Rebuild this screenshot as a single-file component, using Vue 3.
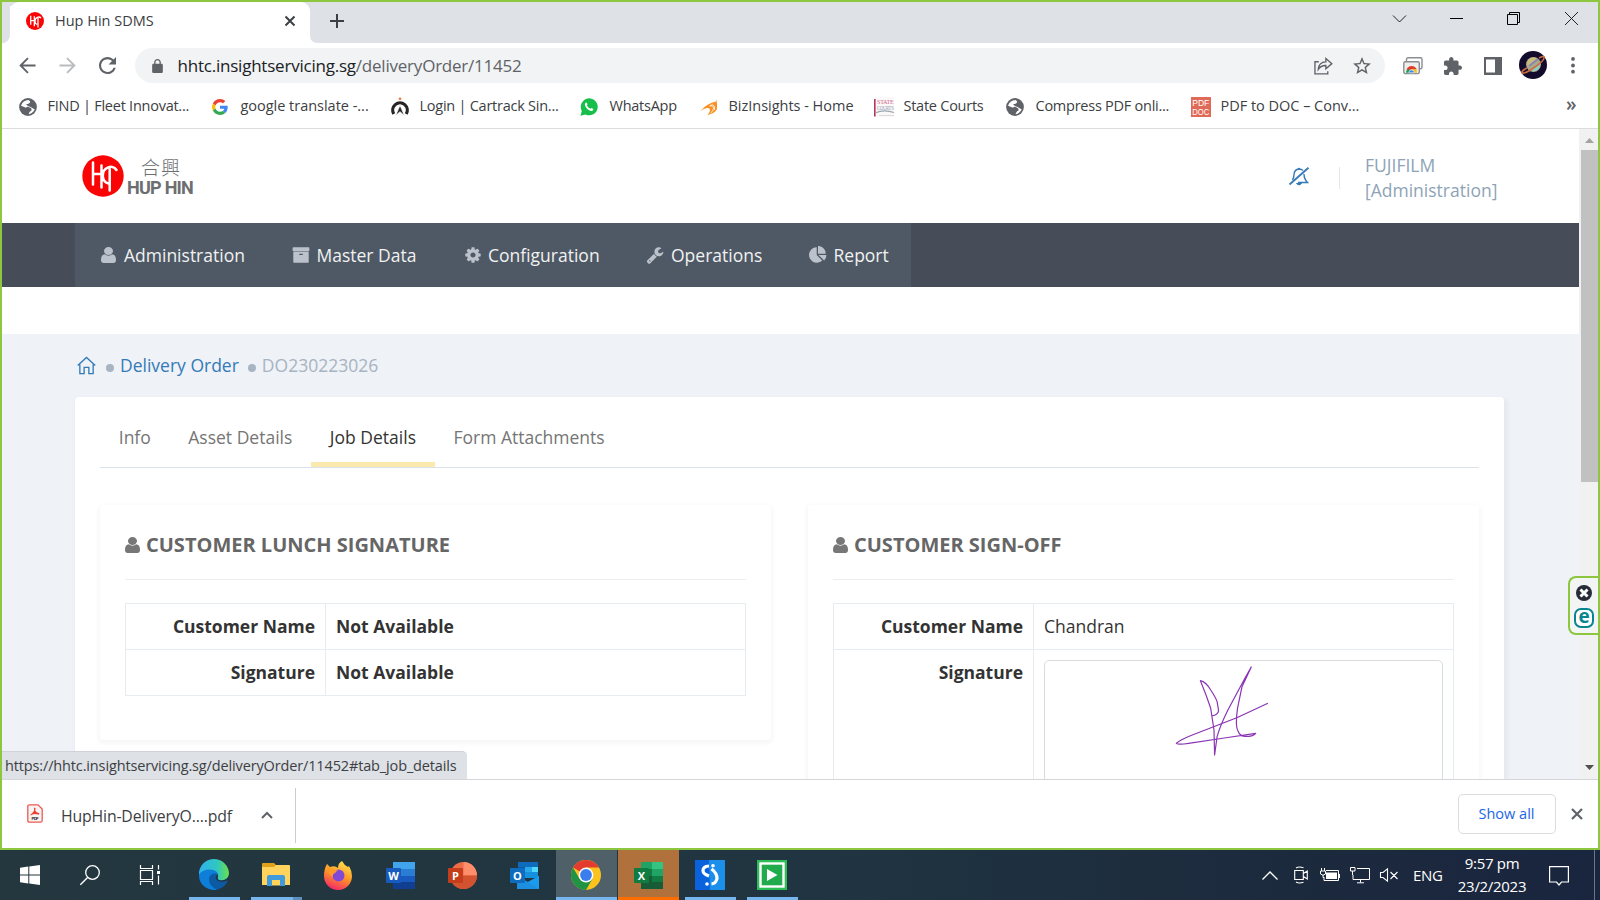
<script setup>
const userPath = 'M1536 1399q0 109-62.5 187t-150.5 78h-854q-88 0-150.5-78t-62.5-187q0-85 8.5-160.5t31.5-152 58.5-131 94-89 134.5-34.5q131 128 313 128t313-128q76 0 134.5 34.5t94 89 58.5 131 31.5 152 8.5 160.5zm-256-887q0 159-112.5 271.5t-271.5 112.5-271.5-112.5-112.5-271.5 112.5-271.5 271.5-112.5 271.5 112.5 112.5 271.5z'

const bookmarks = [
  { icon: 'globe', label: 'FIND | Fleet Innovat...' },
  { icon: 'google', label: 'google translate -...', wide: true },
  { icon: 'cartrack', label: 'Login | Cartrack Sin...' },
  { icon: 'whatsapp', label: 'WhatsApp', gap: true },
  { icon: 'biz', label: 'BizInsights - Home', wide: true },
  { icon: 'courts', label: 'State Courts', gap: true },
  { icon: 'globe', label: 'Compress PDF onli...', gap: true },
  { icon: 'pdfdoc', label: 'PDF to DOC – Conv...', gap: true, wide: true },
]

const menu = [
  { label: 'Administration', box: '256 128 1280 1536', path: userPath },
  { label: 'Master Data', path: 'M1088 832q0-26-19-45t-45-19h-256q-26 0-45 19t-19 45 19 45 45 19h256q26 0 45-19t19-45zm576-192v960q0 26-19 45t-45 19h-1408q-26 0-45-19t-19-45v-960q0-26 19-45t45-19h1408q26 0 45 19t19 45zm64-448v256q0 26-19 45t-45 19h-1536q-26 0-45-19t-19-45v-256q0-26 19-45t45-19h1536q26 0 45 19t19 45z' },
  { label: 'Configuration', path: 'M1152 896q0-106-75-181t-181-75-181 75-75 181 75 181 181 75 181-75 75-181zm512-109v222q0 12-8 23t-20 13l-185 28q-19 54-39 91 35 50 107 138 10 12 10 25t-9 23q-27 37-99 108t-94 71q-12 0-26-9l-138-108q-44 23-91 38-16 136-29 186-7 28-36 28h-222q-14 0-24.5-8.5t-11.5-21.5l-28-184q-49-16-90-37l-141 107q-10 9-25 9-14 0-25-11-126-114-165-168-7-10-7-23 0-12 8-23 15-21 51-66.5t54-70.5q-27-50-41-99l-183-27q-13-2-21-12.5t-8-23.5v-222q0-12 8-23t19-13l186-28q14-46 39-92-40-57-107-138-10-12-10-24 0-10 9-23 26-36 98.5-107.5t94.5-71.5q13 0 26 10l138 107q44-23 91-38 16-136 29-186 7-28 36-28h222q14 0 24.5 8.5t11.5 21.5l28 184q49 16 90 37l142-107q9-9 24-9 13 0 25 10 129 119 165 170 7 8 7 22 0 12-8 23-15 21-51 66.5t-54 70.5q26 50 41 98l183 28q13 2 21 12.5t8 23.5z' },
  { label: 'Operations', path: 'M448 1472q0-26-19-45t-45-19-45 19-19 45 19 45 45 19 45-19 19-45zm644-420l-682 682q-37 37-90 37-52 0-91-37l-106-108q-38-36-38-90 0-53 38-91l681-681q39 98 114.5 173.5t173.5 114.5zm634-435q0 39-23 106-47 134-164.5 217.5t-258.5 83.5q-185 0-316.5-131.5t-131.5-316.5 131.5-316.5 316.5-131.5q58 0 121.5 16.5t107.5 46.5q16 11 16 28t-16 28l-293 169v224l193 107q5-3 79-48.5t135.5-81 70.5-35.5q15 0 23.5 10t8.5 25z' },
  { label: 'Report', path: 'M768 890l546 546q-106 108-247.5 168t-298.5 60q-209 0-385.5-103t-279.5-279.5-103-385.5 103-385.5 279.5-279.5 385.5-103v762zm187 6h773q0 157-60 298.5t-168 247.5zm709-128h-768v-768q209 0 385.5 103t279.5 279.5 103 385.5z' },
]

const tabs = ['Info', 'Asset Details', 'Job Details', 'Form Attachments']
</script>

<template>
  <div class="screen">
    <div class="window">
      <div class="tabstrip">
        <div class="prev-tab"></div>
        <div class="tab">
          <svg class="favicon" viewBox="0 0 42 42"><circle cx="21" cy="21" r="21" fill="#fa0505" /><path d="M11 9V30M11 20H19M19.500 10V33M35 14C30 9 20 13 21 23Q22 28 26 29M28 14V36" fill="none" stroke="#fff" stroke-width="3" /></svg>
          <span class="tab-title">Hup Hin SDMS</span>
          <svg class="tab-close" viewBox="0 0 12 12"><path d="M1.500 1.500L10.500 10.500M10.500 1.500L1.500 10.500" stroke="#3c4043" stroke-width="2" /></svg>
        </div>
        <svg class="flare" viewBox="0 0 8 8"><path d="M0 0V8H8Q0 8 0 0" fill="#fff" /></svg>
        <svg class="plus" viewBox="0 0 14 14"><path d="M7 0V14M0 7H14" stroke="#3c4043" stroke-width="2" /></svg>
        <div class="winbtns">
          <svg viewBox="0 0 13 13"><path d="M0 3.500L6.500 10L13 3.500" fill="none" stroke="#222" /></svg>
          <svg viewBox="0 0 13 13"><path d="M0 6.500H13" stroke="#000" /></svg>
          <svg viewBox="0 0 13 13"><path d="M.5 2.500H10.500V12.500H.5ZM2.500 2V.5H12.500V10.500H11" fill="none" stroke="#000" /></svg>
          <svg viewBox="0 0 13 13"><path d="M0 0L13 13M13 0L0 13" stroke="#222" /></svg>
        </div>
      </div>

      <div class="toolbar">
        <svg class="arrow" viewBox="0 0 18 18"><path d="M17.500 9H2M9.500 1.200L1.700 9L9.500 16.800" fill="none" stroke="#5f6368" stroke-width="2" /></svg>
        <svg class="arrow fwd" viewBox="0 0 18 18"><path d="M.5 9H16M8.500 1.200L16.300 9L8.500 16.800" fill="none" stroke="#babcbe" stroke-width="2" /></svg>
        <svg class="reload" viewBox="4 4 16 16"><path fill="#5f6368" d="M17.650 6.350C16.200 4.900 14.210 4 12 4c-4.420 0-7.990 3.580-7.990 8s3.570 8 7.990 8c3.730 0 6.840-2.550 7.730-6h-2.080c-.82 2.330-3.040 4-5.650 4-3.310 0-6-2.690-6-6s2.690-6 6-6c1.660 0 3.140.69 4.220 1.780L13 11h7V4l-2.350 2.350z" /></svg>
        <div class="omnibox">
          <svg class="lock" viewBox="4 1 16 21"><path fill="#5f6368" d="M18 8h-1V6c0-2.760-2.240-5-5-5S7 3.240 7 6v2H6c-1.100 0-2 .9-2 2v10c0 1.100.9 2 2 2h12c1.100 0 2-.9 2-2V10c0-1.100-.9-2-2-2zM9 6c0-1.660 1.340-3 3-3s3 1.340 3 3v2H9V6z" /></svg>
          <span class="url">hhtc.insightservicing.sg<i>/deliveryOrder/11452</i></span>
          <svg class="share" viewBox="0 0 20 18"><path d="M5 4.500H1V17.200H14.500V14.500M4.500 12.500Q5 5 12.500 4.700V1L18.800 6.500L12.500 12V8.500Q7.500 8.200 4.500 12.500Z" fill="none" stroke="#5f6368" stroke-width="1.400" /></svg>
          <svg class="star" viewBox="2 2 20 19"><path fill="#5f6368" d="M22 9.240l-7.190-.62L12 2 9.190 8.630 2 9.240l5.460 4.730L5.820 21 12 17.270 18.180 21l-1.630-7.030L22 9.240zM12 15.400l-3.760 2.270 1-4.280-3.320-2.880 4.380-.38L12 6.100l1.710 4.040 4.380.38-3.320 2.880 1 4.280L12 15.400z" /></svg>
        </div>
        <div class="actions">
          <svg class="a1" viewBox="0 0 20 18"><rect x="3.500" y=".8" width="15.500" height="11" rx="1.500" fill="#fff" stroke="#8a8d91" stroke-width="1.400" /><rect x=".8" y="4.800" width="15.500" height="11.800" rx="1.500" fill="#eee" stroke="#8a8d91" stroke-width="1.400" /><path d="M3 15.800A5.500 5.500 0 0 1 5 11.500L8.500 13V15.800Z" fill="#1e9e4a" /><path d="M3.500 12.500A5.500 5.500 0 0 1 13.800 12.500H8.500Z" fill="#e33b2e" /><path d="M13.500 12.300L14 15.800H8.500V12.300Z" fill="#fbc116" /><path d="M5.800 15.800A2.800 2.800 0 0 1 11.400 15.800Z" fill="#3f83f1" stroke="#fff" stroke-width=".6" /></svg>
          <svg class="a2" viewBox="2 1 21 21"><path fill="#5f6368" d="M20.500 11H19V7c0-1.100-.9-2-2-2h-4V3.500C13 2.120 11.880 1 10.500 1S8 2.120 8 3.500V5H4c-1.100 0-1.990.9-1.990 2v3.800H3.500c1.490 0 2.700 1.210 2.700 2.700s-1.210 2.700-2.700 2.700H2V20c0 1.100.9 2 2 2h3.800v-1.500c0-1.490 1.210-2.700 2.700-2.700 1.490 0 2.700 1.210 2.700 2.700V22H17c1.100 0 2-.9 2-2v-4h1.500c1.380 0 2.500-1.120 2.500-2.500S21.880 11 20.500 11z" /></svg>
          <svg class="a3" viewBox="0 0 18 18"><path d="M0 0H18V18H0ZM2 2.500V15.500H11V2.500Z" fill="#5f6368" fill-rule="evenodd" /></svg>
          <svg class="a4" viewBox="0 0 28 28"><circle cx="14" cy="14" r="14" fill="#120b2b" /><circle cx="14.500" cy="13.500" r="7.500" fill="#a8a98a" /><path d="M9 9Q13 5 18 7.500L10 16Q7 13 9 9Z" fill="#c9bb7c" /><path d="M14 20.500Q21 19 21.500 13L12 18Z" fill="#8fd0c5" /><path d="M10 15L19 8" stroke="#8585b5" stroke-width="1.800" /><path d="M3 22Q2 20 8 17M3 22Q6 23 16 16T25 6Q25 4.500 20 7" fill="none" stroke="#cf6c42" stroke-width="1.600" /></svg>
          <svg class="a5" viewBox="0 0 4 18"><circle cx="2" cy="2" r="2" fill="#5f6368" /><circle cx="2" cy="9" r="2" fill="#5f6368" /><circle cx="2" cy="15.500" r="2" fill="#5f6368" /></svg>
        </div>
      </div>

      <div class="bookmarks">
        <div v-for="(b, i) in bookmarks" :key="i" class="bm" :class="{ wide: b.wide, gap: b.gap }">
          <span class="bm-icon">
            <svg v-if="b.icon === 'globe'" viewBox="0 0 18 18" width="18" height="18"><circle cx="9" cy="9" r="8.900" fill="#5f6368" /><path d="M2 7.800L7 9.800Q8.500 8 10.500 9.600Q13 10 12.500 12.500Q10.500 13 9.500 16.200Q13 16 15.800 11.500L11.500 9Q8.500 8.500 7 6Q11.500 6 11 3.200L9.500 2Q4 2.200 2 7.800Z" fill="#fff" /></svg>
            <svg v-else-if="b.icon === 'google'" viewBox="0 0 48 48" width="16" height="16"><path fill="#ea4335" d="M24 9.500c3.500 0 6.700 1.200 9.200 3.600l6.900-6.900C35.900 2.400 30.500 0 24 0 14.600 0 6.500 5.400 2.600 13.200l8 6.200C12.400 13.700 17.700 9.500 24 9.500z" /><path fill="#4285f4" d="M47 24.600c0-1.600-.2-3.100-.4-4.600H24v9h12.900c-.6 3-2.300 5.500-4.800 7.200l7.700 6C44.400 38 47 32 47 24.600z" /><path fill="#fbbc05" d="M10.500 28.600c-.5-1.400-.8-3-.8-4.600s.3-3.100.8-4.600l-8-6.200C.9 16.500 0 20.100 0 24s.9 7.500 2.600 10.800z" /><path fill="#34a853" d="M24 48c6.500 0 11.900-2.100 15.900-5.800l-7.700-6c-2.200 1.500-4.900 2.300-8.200 2.300-6.300 0-11.600-4.200-13.500-9.900l-8 6.200C6.500 42.600 14.600 48 24 48z" /></svg>
            <svg v-else-if="b.icon === 'cartrack'" viewBox="0 0 18 20" width="18" height="20"><circle cx="9" cy="1.700" r="1.500" fill="#f0895c" /><path d="M2.800 17A7.300 7.300 0 1 1 15.200 17" fill="none" stroke="#262626" stroke-width="3.200" /><path d="M9 8.200L13.500 18.800L9 14.700L4.500 18.800Z" fill="#262626" stroke="#fff" stroke-width=".8" /></svg>
            <svg v-else-if="b.icon === 'whatsapp'" viewBox="0 0 18 18" width="18" height="18"><path d="M.5 17.800L1.800 13A8.500 8.500 0 1 1 5.500 16.500Z" fill="#16bf4b" /><path d="M5.600 4.700Q6.800 3.900 7.500 6.300L6.900 7.500Q8 9.800 10.400 10.800L11.500 10Q14 10.800 13 12.200Q11.300 14.200 7.600 11.200Q3.500 7.200 5.600 4.700Z" fill="#fff" /></svg>
            <svg v-else-if="b.icon === 'biz'" viewBox="0 0 18 18" width="18" height="18"><path d="M.5 13Q7 5 16 3.500L16.500 1L17 6V11Q15 15.500 7.500 17Q11 13 9.500 10.500Q6 9 .5 13Z" fill="#f79226" /><path d="M9.500 8Q14 7 13.500 10.500Q13 13.500 10.500 15M10 7.500Q13 5.500 14.500 8.500V12" fill="none" stroke="#fff" stroke-width=".8" /></svg>
            <svg v-else-if="b.icon === 'courts'" viewBox="0 0 20 20" width="20" height="20"><rect width="20" height="20" fill="#fbf8f9" /><path d="M.8 2V19.500" stroke="#b8325a" stroke-width="1.600" /><text x="3" y="6.500" font-size="6" textLength="16.500" lengthAdjust="spacingAndGlyphs" fill="#d1668a" font-family="Liberation Serif">STATE</text><text x="3" y="12.500" font-size="5.500" textLength="16.500" lengthAdjust="spacingAndGlyphs" fill="#8b97ac" font-family="Liberation Serif">COURTS</text><path d="M1 16Q10 12 20 15.500" fill="none" stroke="#9aa5b0" stroke-width="1.200" /><path d="M5 18.500H20" stroke="#dadada" /></svg>
            <svg v-else viewBox="0 0 20 20" width="20" height="20"><rect width="20" height="20" fill="#df6a57" /><text x="1.300" y="8.800" font-size="9" textLength="17" lengthAdjust="spacingAndGlyphs" fill="#fff" font-family="Liberation Sans">PDF</text><text x="1.300" y="17.800" font-size="9" textLength="17" lengthAdjust="spacingAndGlyphs" fill="#fff" font-family="Liberation Sans">DOC</text></svg>
          </span>
          <span class="bm-label">{{ b.label }}</span>
        </div>
        <span class="more">»</span>
      </div>

      <div class="viewport">
        <div class="page">
          <header class="head">
            <div class="logo">
              <svg class="logo-mark" viewBox="0 0 42 42"><circle cx="21" cy="21" r="20.700" fill="#fa0505" /><path d="M11 7.500V29.500M11 19H19.500M19.500 10.500V32.500M34.500 15C31 9 20.500 12 20.800 21Q21 27 26.500 28.500M27.700 14V35.500" fill="none" stroke="#fff" stroke-width="2.500" stroke-linecap="round" /></svg>
              <div class="logo-text"><span class="cn">合興</span><span class="en">HUP HIN</span></div>
            </div>
            <div class="user">
              <svg class="bell" viewBox="0 0 20 20"><path d="M3.500 13Q5 11 5 7.500Q5.300 2.500 10 2Q12.500 2 14 3.500M15 7Q15 12 18.500 15.500H9" fill="none" stroke="#337ab7" stroke-width="1.400" /><path d="M.5 17.500L19.500 .8" stroke="#337ab7" stroke-width="1.800" /><path d="M7.500 16.500Q10 19.500 12.500 16.500Z" fill="#337ab7" stroke="#337ab7" /><circle cx="10" cy="1.800" r="1.100" fill="#337ab7" /></svg>
              <i class="sep"></i>
              <div class="who"><div>FUJIFILM</div><div>[Administration]</div></div>
            </div>
          </header>
          <nav class="nav">
            <div class="menu">
              <a v-for="m in menu" :key="m.label" :class="'m-' + m.label.slice(0, 3).toLowerCase()"><svg :viewBox="m.box || '0 0 1792 1792'" preserveAspectRatio="none"><path :d="m.path" fill="#bcc2cb" /></svg><span>{{ m.label }}</span></a>
            </div>
          </nav>
          <div class="strip"></div>
          <main class="content">
            <div class="crumbs">
              <svg class="home" viewBox="0 0 20 19"><path d="M.8 9.500L10 1L19.200 9.500M3 8.500V18H7.500V11.500H12.500V18H17V8.500" fill="none" stroke="#337ab7" stroke-width="1.400" /></svg>
              <i class="dot d1"></i><a>Delivery Order</a><i class="dot d2"></i><span>DO230223026</span>
            </div>
            <section class="card">
              <div class="tabs">
                <a v-for="t in tabs" :key="t" :class="{ on: t === 'Job Details' }">{{ t }}</a>
              </div>
              <div class="cols">
                <section class="portlet short">
                  <h2><svg viewBox="256 128 1280 1536" preserveAspectRatio="none"><path :d="userPath" fill="#777" /></svg>CUSTOMER LUNCH SIGNATURE</h2>
                  <table>
                    <tbody>
                      <tr><th>Customer Name</th><td><b>Not Available</b></td></tr>
                      <tr><th>Signature</th><td><b>Not Available</b></td></tr>
                    </tbody>
                  </table>
                </section>
                <section class="portlet">
                  <h2><svg viewBox="256 128 1280 1536" preserveAspectRatio="none"><path :d="userPath" fill="#777" /></svg>CUSTOMER SIGN-OFF</h2>
                  <table>
                    <tbody>
                      <tr><th>Customer Name</th><td>Chandran</td></tr>
                      <tr><th>Signature</th><td>
                        <div class="sign"><svg viewBox="-105 1 397 180" width="397" height="180"><path d="M101.400 6.700L95.700 16.700L77.900 50Q70 66 67.100 76.700L64.600 95L64 70L60.700 48.300Q56 34 50.400 20.700Q56 22 60.700 30Q66 38 67.100 41.700L68.600 50.700Q68 55 61.800 56M117.900 43.300L86.800 57.700L63.600 66.700L40.400 75.700Q30 80 26.400 83.300Q28 85 38.600 83.300L74.300 78L105.700 73.300Q102 77 97 76.300Q90 77 88 71Q85 66 87.500 48.300L92 26.700L101.400 6.700" fill="none" stroke="#8a35b5" stroke-width="1.200" stroke-linejoin="round" /></svg></div>
                      </td></tr>
                    </tbody>
                  </table>
                </section>
              </div>
            </section>
          </main>
        </div>
        <div class="scrollbar">
          <svg viewBox="0 0 9 5" class="sb-arrow"><path d="M0 5L4.500 0L9 5Z" fill="#a3a3a3" /></svg>
          <div class="thumb"></div>
          <svg viewBox="0 0 9 5" class="sb-arrow dn"><path d="M0 0L4.500 5L9 0Z" fill="#505050" /></svg>
        </div>
        <div class="status">https://hhtc.insightservicing.sg/deliveryOrder/11452#tab_job_details</div>
      </div>

      <div class="downloads">
        <svg class="pdf" viewBox="0 0 16 19"><path d="M2.500 .8H11L15.200 5V16.500Q15.200 18.200 13.500 18.200H2.500Q.8 18.200 .8 16.500V2.500Q.8 .8 2.500 .8Z" fill="#f7f3f3" stroke="#ee5a50" stroke-width="1.300" /><path d="M7.500 3.500Q9 3.500 8.200 6.500Q9 8.500 12 9Q13 10.500 11 10.500Q7.500 9.300 5 10.800Q3.300 12 3.500 10.500Q5.500 9.500 7.200 6.500Q6.500 3.800 7.500 3.500Z" fill="#ef3b30" /><text x="4.600" y="15.800" font-size="4.200" font-weight="bold" textLength="7" fill="#222" font-family="Liberation Sans">PDF</text></svg>
        <span class="fname">HupHin-DeliveryO....pdf</span>
        <svg class="up" viewBox="0 0 12 8"><path d="M1 7L6 2L11 7" fill="none" stroke="#5f6368" stroke-width="2" /></svg>
        <i class="vline"></i>
        <button>Show all</button>
        <svg class="dclose" viewBox="0 0 12 12"><path d="M1 1L11 11M11 1L1 11" stroke="#5f6368" stroke-width="2.200" /></svg>
      </div>
      <div class="widget">
        <svg viewBox="0 0 16 16" width="16" height="16"><circle cx="8" cy="8" r="8" fill="#282c37" /><path d="M4.500 4.500L11.500 11.500M11.500 4.500L4.500 11.500" stroke="#fff" stroke-width="3" /></svg>
        <span class="e">e</span>
      </div>
    </div>

    <footer class="taskbar">
      <div class="slot s1"><svg viewBox="0 0 20 20" width="20" height="20"><path d="M0 2.800L8.300 1.600V9.500H0ZM9.300 1.500L20 0V9.500H9.300ZM0 10.500H8.300V18.400L0 17.200ZM9.300 10.500H20V20L9.300 18.500Z" fill="#fff" /></svg></div>
      <div class="slot s1"><svg viewBox="0 0 20 20" width="20" height="20"><circle cx="12.500" cy="7.500" r="6.800" fill="none" stroke="#fff" stroke-width="1.300" /><path d="M7.800 12.300L.3 19.800" stroke="#fff" stroke-width="1.400" /></svg></div>
      <div class="slot s1"><svg viewBox="0 0 20 20" width="20" height="20"><path d="M.5 0V3.500H12.500V0M.5 20V16.500H12.500V20M.5 5.500H12.500V14.500H.5ZM18.500 0V4.500M18.500 10.500V19.500" fill="none" stroke="#fff" stroke-width="1.200" /><rect x="17" y="6" width="3" height="3" fill="#fff" /></svg></div>
      <div class="slot run edge"><svg viewBox="0 0 30 30" width="30" height="30">
        <defs><linearGradient id="eg" x1="0" x2="1"><stop offset="0" stop-color="#2fb3ef" /><stop offset=".6" stop-color="#2fc6c0" /><stop offset="1" stop-color="#6be04c" /></linearGradient></defs>
        <circle cx="15" cy="15" r="15" fill="#0c59a4" /><path d="M0 15A15 15 0 0 1 30 13Q30 20 22 20.500Q17 20 19 16Q19 10 11 10Q3 10 0 15Z" fill="url(#eg)" /><path d="M0 15Q3 9.500 11 9.500Q18 10 18.500 14Q12 12 10 18Q9.500 26 18 29.700Q15 30.500 10 29Q0 25 0 15Z" fill="#0e7fd8" /><path d="M18.500 14Q15 18 18.500 20.500Q23 23 28 20.500L30 22V15Q29 20 22.500 20.500Q17.500 20.500 19 16Z" fill="#22353f" /></svg></div>
      <div class="slot run files"><svg viewBox="0 0 28 24" width="28" height="24"><path d="M0 1Q0 0 1 0H12L14 2V6H0Z" fill="#e0a11b" /><path d="M0 4H12L14 2H27Q28 2 28 3V22H0Z" fill="#ffd35c" /><path d="M5 23V14Q5 12 7 12H21Q23 12 23 14V23H18V17H10V23Z" fill="#3f9bdc" /><path d="M10 22.500V17H18V22.500Z" fill="#ffd35c" /></svg></div>
      <div class="slot"><svg viewBox="0 0 28 29" width="28" height="29">
        <defs><linearGradient id="fx" x1=".7" y1="0" x2=".3" y2="1"><stop offset="0" stop-color="#ffe24a" /><stop offset=".5" stop-color="#ff9426" /><stop offset="1" stop-color="#f4246c" /></linearGradient></defs>
        <path d="M18 0Q20 4 24 6L25 5Q28 10 28 15A14 14 0 0 1 0 15Q0 8 3 3L6 6Q11 4 14 7Q14 2 18 0Z" fill="url(#fx)" /><circle cx="14.500" cy="14.500" r="6" fill="#8249d8" /><path d="M3 4Q8 10 14 9L11 12Q8 13 9 16Q4 14 3 4Z" fill="#ff9a2b" /></svg></div>
      <div class="slot"><svg viewBox="0 0 29 27" width="29" height="27"><path d="M7 0H29V7H7Z" fill="#41a5ee" /><path d="M7 7H29V14H7Z" fill="#2b7cd3" /><path d="M7 14H29V20H7Z" fill="#185abd" /><path d="M7 20H29V27H7Z" fill="#103f91" /><rect y="6" width="15" height="15" fill="#185abd" rx="1" /><text x="7.500" y="17.500" text-anchor="middle" font-size="11" font-weight="bold" fill="#fff" font-family="Open Sans">W</text></svg></div>
      <div class="slot"><svg viewBox="0 0 29 27" width="29" height="27"><circle cx="15.500" cy="13.500" r="13.500" fill="#ed6c47" /><path d="M15.500 0A13.500 13.500 0 0 1 29 13.500H15.500Z" fill="#ff8f6b" /><path d="M2 13.500H29A13.500 13.500 0 0 1 2 13.500Z" fill="#d35230" /><rect y="6" width="15" height="15" fill="#c43e1c" rx="1" /><text x="7.500" y="17.500" text-anchor="middle" font-size="11" font-weight="bold" fill="#fff" font-family="Open Sans">P</text></svg></div>
      <div class="slot"><svg viewBox="0 0 29 27" width="29" height="27"><path d="M8 0H28V16H8Z" fill="#0f6cbd" /><path d="M8 5H15V16H8Z" fill="#0a5aa8" /><path d="M15 5H22V10H15Z" fill="#28a8ea" /><path d="M22 5H28V10H22Z" fill="#50d9ff" /><path d="M15 10H28V16H15Z" fill="#1490df" /><path d="M7 14L18 20L29 14V27H7Z" fill="#1c8fe0" /><path d="M18 20L29 14V27Z" fill="#1a9bee" /><rect y="6" width="15" height="15" fill="#0f6cbd" rx="1" /><text x="7.500" y="17.500" text-anchor="middle" font-size="11" font-weight="bold" fill="#fff" font-family="Open Sans">O</text></svg></div>
      <div class="slot run chrome"><svg viewBox="0 0 30 30" width="30" height="30"><circle cx="15" cy="15" r="15" fill="#fcc31e" /><path d="M15 15L2 7.500A15 15 0 0 1 28 7.500H15Z" fill="#e33b2e" /><path d="M2 7.500A15 15 0 0 0 15 30L21.500 18.750L15 15L8.500 18.750Z" fill="#229342" /><circle cx="15" cy="15" r="7.400" fill="#fff" /><circle cx="15" cy="15" r="5.900" fill="#3b7ded" /></svg></div>
      <div class="slot run excel"><svg viewBox="0 0 29 27" width="29" height="27"><path d="M7 0H18V7H7Z" fill="#21a366" /><path d="M18 0H29V7H18Z" fill="#33c481" /><path d="M7 7H18V14H7Z" fill="#107c41" /><path d="M18 7H29V14H18Z" fill="#21a366" /><path d="M7 14H18V27H7Z" fill="#185c37" /><path d="M18 14H29V20H18Z" fill="#107c41" /><path d="M18 20H29V27H18Z" fill="#185c37" /><rect y="6" width="15" height="15" fill="#107c41" rx="1" /><text x="7.500" y="17.500" text-anchor="middle" font-size="11" font-weight="bold" fill="#fff" font-family="Open Sans">X</text></svg></div>
      <div class="slot run"><svg viewBox="0 0 30 30" width="30" height="30"><rect width="30" height="30" fill="#0a63dd" /><path d="M14 0H30V30H15Z" fill="#1c8fea" /><path d="M14 6Q8 6.500 8 10.500Q8 14 14 16" fill="none" stroke="#fff" stroke-width="3.200" /><path d="M16.500 9Q22 13 22 18.500Q21 23.500 16.500 24" fill="none" stroke="#fff" stroke-width="3.200" /><circle cx="18" cy="5.800" r="1.800" fill="#fff" /><circle cx="12" cy="24" r="1.800" fill="#fff" /></svg></div>
      <div class="slot run"><svg viewBox="0 0 30 30" width="30" height="30"><rect width="30" height="30" fill="#2dbd57" /><rect x="3.500" y="3.500" width="23" height="23" fill="#22ab4c" stroke="#fff" stroke-width="2.400" /><path d="M10 9L20.500 15L10 21Z" fill="#fff" /></svg></div>

      <div class="tray">
        <svg class="t1" viewBox="0 0 16 9"><path d="M.5 8.500L8 1L15.500 8.500" fill="none" stroke="#fff" stroke-width="1.300" /></svg>
        <svg class="t2" viewBox="0 0 14 18"><path d="M.7 4.500H9.300V13.500H.7ZM9.300 7.500L13.300 5V13L9.300 10.500M2 2Q5 .2 9.500 1.800M2 16Q5 17.800 9.500 16.200" fill="none" stroke="#fff" stroke-width="1.100" /></svg>
        <svg class="t3" viewBox="0 0 20 14"><path d="M6 2.500H18.500V12.500H4V9M19.500 6V10" fill="none" stroke="#fff" /><rect x="6" y="4.500" width="11" height="6.500" fill="#fff" /><path d="M1.500 0V3M4.500 0V3M.5 3H5.500V6Q3 8.500 .5 6ZM3 7V9.500H4" fill="none" stroke="#fff" /></svg>
        <svg class="t4" viewBox="0 0 20 17"><path d="M7 1.500H19.500V12.500H3V8M10.500 12.500V15.500M7 15.800H14M.5 .5H5V4H.5ZM2.500 4V8" fill="none" stroke="#fff" /></svg>
        <svg class="t5" viewBox="0 0 18 14"><path d="M.5 4.500H3L7.500 .8V13.200L3 9.500H.5ZM10.500 4L17.500 11M17.500 4L10.500 11" fill="none" stroke="#fff" stroke-width="1.100" /></svg>
        <span class="eng">ENG</span>
        <div class="clock"><div>9:57 pm</div><div>23/2/2023</div></div>
        <svg class="note" viewBox="0 0 20 20"><path d="M.6 .6H19.400V16H12.500L10 19L7.500 16H.6Z" fill="none" stroke="#fff" stroke-width="1.200" /></svg>
        <i class="peek"></i>
      </div>
    </footer>
  </div>
</template>

<style>
html, body { margin: 0; overflow: hidden; }
</style>

<style scoped>
* { box-sizing: border-box; }
svg { display: block; flex: none; overflow: visible; }
i { font-style: normal; }
.screen { width: 1600px; height: 900px; display: flex; flex-direction: column; overflow: hidden; font-family: "Open Sans", "Noto Sans", sans-serif; }
.window { position: relative; width: 1600px; height: 850px; border: 2px solid #8dc63f; background: #fff; display: flex; flex-direction: column; white-space: nowrap; }

.tabstrip { height: 41px; flex: none; background: #dee1e6; display: flex; align-items: flex-end; }
.prev-tab { width: 8px; height: 41px; background: #dee1e6; border-bottom-right-radius: 8px; box-shadow: 3px 4px 0 0 #fff; }
.tab { width: 300px; height: 41px; background: #fff; border-radius: 9px 9px 0 0; display: flex; align-items: center; padding: 0 14px 3px 16px; z-index: 1; }
.favicon { width: 18px; height: 18px; }
.tab-title { margin-left: 11px; padding-bottom: 2px; font-size: 14.500px; letter-spacing: 0; color: #3c4043; flex: 1; }
.tab-close { width: 12px; height: 12px; }
.flare { width: 8px; height: 8px; }
.plus { width: 14px; height: 14px; margin: 0 0 15px 12px; }
.winbtns { margin-left: auto; display: flex; gap: 44.500px; padding: 0 20px 18px 0; }
.winbtns svg { width: 13px; height: 13px; }
.winbtns svg:nth-child(3) { margin: 0 .5px 0 -.5px; }

.toolbar { height: 42px; flex: none; display: flex; align-items: center; padding: 3px 0 0 17px; }
.arrow { width: 17px; height: 17px; }
.fwd { margin-left: 23px; }
.reload { width: 17px; height: 17px; margin-left: 23px; }
.omnibox { margin-left: 19px; width: 1250px; height: 35px; border-radius: 18px; background: #f1f3f4; display: flex; align-items: center; padding: 0 14px 0 17px; }
.lock { width: 11px; height: 14px; }
.url { margin-left: 14.500px; flex: 1; font-size: 17px; letter-spacing: -.22px; color: #202124; }
.url i { color: #5f6368; }
.share { width: 19px; height: 18px; margin-right: 20px; }
.star { width: 18px; height: 17px; }
.actions { display: flex; align-items: center; margin-left: 18px; }
.a1 { width: 20px; height: 18px; }
.a2 { width: 18px; height: 18px; margin-left: 21px; }
.a3 { width: 18px; height: 18px; margin-left: 21.500px; }
.a4 { width: 28px; height: 28px; margin-left: 17.500px; margin-top: -1px; }
.a5 { width: 4px; height: 17px; margin-left: 23.500px; }

.bookmarks { height: 44px; flex: none; border-bottom: 1px solid #dadce0; display: grid; grid-template-columns: 193px 179px 189px 120px 174px 132px 185px 375px auto; padding-left: 17px; align-items: center; font-size: 14.500px; letter-spacing: -.25px; color: #3c4043; }
.bm { display: flex; align-items: center; }
.bm-icon { width: 20px; margin-right: 8.500px; display: flex; }
.bm-label { padding-bottom: 2px; }
.gap .bm-icon { margin-right: 9.500px; }
.wide { letter-spacing: -.02px; }
.more { font-size: 19px; font-weight: 600; color: #5f6368; padding-bottom: 5px; }

.viewport { position: relative; height: 651px; flex: none; display: flex; overflow: hidden; border-bottom: 1px solid #d4d6d9; }
.page { width: 1577px; height: 651px; overflow: hidden; background: #eff2f7; font-size: 17.500px; }
.scrollbar { width: 19px; background: #f1f1f1; display: flex; flex-direction: column; align-items: center; padding: 9px 0 9px 2px; }
.sb-arrow { width: 9px; height: 5px; }
.thumb { width: 17px; height: 332px; background: #c1c1c1; margin-top: 7px; }
.dn { margin-top: auto; }
.head { height: 94px; background: #fff; display: flex; justify-content: space-between; padding: 0 84px 0 80px; }
.logo { display: flex; padding-top: 26px; }
.logo-mark { width: 42px; height: 42px; }
.logo-text { margin-left: 3px; display: flex; flex-direction: column; color: #6d6e70; }
.cn { font-family: "Noto Sans CJK TC", sans-serif; font-weight: 300; font-size: 19px; line-height: 22px; margin: 1px 0 0 14px; height: 22px; letter-spacing: 1px; }
.en { font-family: Roboto, sans-serif; font-weight: 700; font-size: 18px; line-height: 20px; letter-spacing: -.75px; }
.user { display: flex; }
.bell { width: 20px; height: 20px; margin-top: 38px; }
.sep { width: 1px; height: 22px; background: #e3e6ea; margin: 38px 25px 0 30px; }
.who { margin-top: 24px; line-height: 25px; color: #8ea3b6; width: 130px; }
.nav { height: 64px; background: #464d58; padding-left: 73px; }
.menu { width: 836px; height: 64px; background: #4e5965; display: flex; color: #f1f1f1; padding-left: 24px; }
.menu a { display: flex; align-items: center; }
.menu svg { width: 18px; height: 18px; margin-right: 6.500px; }
.m-adm { width: 193px; }
.menu .m-adm svg { width: 15px; height: 16px; margin: 0 8px 0 2px; }
.m-mas { width: 171.500px; }
.m-con { width: 182.500px; }
.m-ope { width: 163px; }
.menu .m-ope svg { margin-right: 7px; }
.strip { height: 47px; background: #fff; }
.content { padding: 0 0 0 73px; }
.crumbs { height: 63px; display: flex; align-items: center; padding: 0 0 1px 2px; color: #a7b4c2; }
.crumbs a { color: #337ab7; }
.home { width: 19px; height: 19px; }
.dot { width: 8px; height: 8px; border-radius: 4px; background: #a7b4c2; margin-top: 6px; }
.d1 { margin-left: 10px; margin-right: 6px; }
.d2 { margin-left: 9px; margin-right: 6px; }
.card { width: 1429px; height: 500px; background: #fff; border-radius: 4px; box-shadow: 2px 3px 4px 2px rgba(70, 80, 100, .05); padding: 22px 25px 0; }
.tabs { height: 49px; border-bottom: 1px solid #dbe3ea; display: flex; }
.tabs a { padding: 6px 18.750px 0; height: 48px; color: #757575; }
.tabs .on { color: #333; border-bottom: 5px solid #fbeaae; }
.cols { display: flex; justify-content: space-between; margin-top: 37px; }
.portlet { width: 671px; height: 600px; border-radius: 4px; box-shadow: 0 2px 4px 2px rgba(0, 0, 0, .035); padding: 15px 25px; background: #fff; }
.short { height: 235px; }
h2 { margin: 0 0 23px; height: 60px; border-bottom: 1px solid #ecedf0; font-size: 20px; font-weight: 700; color: #666; display: flex; align-items: center; padding-bottom: 11px; }
h2 svg { width: 15px; height: 16px; margin: 2px 6px 0 0; }
table { border-collapse: collapse; width: 621px; table-layout: fixed; color: #333; }
th, td { border: 1px solid #e7ecf1; height: 46px; padding: 10px 10px 9px; line-height: 25px; vertical-align: top; }
th { width: 200px; text-align: right; font-weight: 700; }
td b { font-weight: 700; }
.sign { height: 200px; border: 1px solid #d9dcdf; border-radius: 5px; overflow: hidden; }
.status { position: absolute; left: 0; bottom: -1px; width: 465px; height: 29px; background: #dee1e6; border-top: 1px solid #cfd2d7; border-top-right-radius: 5px; padding-left: 3px; line-height: 28px; font-size: 14.500px; letter-spacing: -.14px; color: #3c4043; }

.downloads { height: 68px; display: flex; align-items: center; background: #fff; padding: 0 15px 0 25px; }
.pdf { width: 16px; height: 19px; margin-top: -1px; }
.fname { width: 218px; padding-left: 18px; font-size: 15.800px; letter-spacing: -.15px; color: #3c4043; margin-top: 3px; }
.up { width: 12px; height: 8px; margin-top: 2px; }
.vline { width: 1px; height: 55px; background: #c9ccd1; margin: 2px 0 0 22px; }
button { margin-left: auto; width: 98px; height: 40px; background: #fff; border: 1px solid #dadce0; border-radius: 5px; font: 14.500px "Open Sans", sans-serif; letter-spacing: 0; color: #1a66e8; padding: 0 1px 2px 0; }
.dclose { width: 12px; height: 12px; margin-left: 15px; }
.widget { position: absolute; right: 0; top: 574px; width: 30px; height: 59px; border: 2px solid #8dc63f; border-right: 0; border-radius: 8px 0 0 8px; background: #f3f5f5; display: flex; flex-direction: column; align-items: center; gap: 7px; padding: 7px 0 0; }
.e { width: 20px; height: 20px; border: 2px solid #078590; border-radius: 7px; background: #fff; color: #078590; font: bold 19px/13px "Open Sans", sans-serif; text-align: center; }

.taskbar { height: 50px; display: flex; background: linear-gradient(90deg, #24373f, #203541 50%, #1c2a3d 80%, #1a253f); color: #fff; }
.slot { width: 62px; height: 50px; display: flex; align-items: center; justify-content: center; border-bottom: 3px solid transparent; padding: 3px 1px 0 0; flex: none; background-clip: padding-box; }
.s1 { width: 60px; padding-right: 0; }
.run { width: 51px; margin: 0 5.500px; border-bottom-color: #76b5ed; }
.edge { margin-left: 9px; }
.files { margin-left: 5.500px; margin-right: 5.500px; border-image: linear-gradient(90deg, #76b5ed 78%, #5d8fbd 78%) 3; border-top: 0; border-left: 0; border-right: 0; }
.chrome { width: 61px; margin: 0 1px 0 .5px; background-color: #4f6068; }
.excel { width: 61px; margin: 0 .5px 0 0; background-color: #b0713c; border-bottom-color: #ff6d00; }
.tray { margin-left: auto; display: flex; align-items: center; font-size: 15px; letter-spacing: -.3px; }
.t1 { width: 16px; height: 9px; margin-right: 16px; }
.t2 { width: 14px; height: 18px; margin-right: 12px; }
.t3 { width: 20px; height: 14px; margin-right: 10px; }
.t4 { width: 20px; height: 17px; margin-right: 10px; }
.t5 { width: 18px; height: 14px; margin-right: 15px; }
.eng { width: 30px; }
.clock { width: 80px; margin-left: 9px; text-align: center; line-height: 23px; white-space: nowrap; }
.note { width: 20px; height: 20px; margin: 2px 25px 0 17px; }
.peek { width: 6px; height: 50px; border-left: 1px solid #6c7684; }
</style>
